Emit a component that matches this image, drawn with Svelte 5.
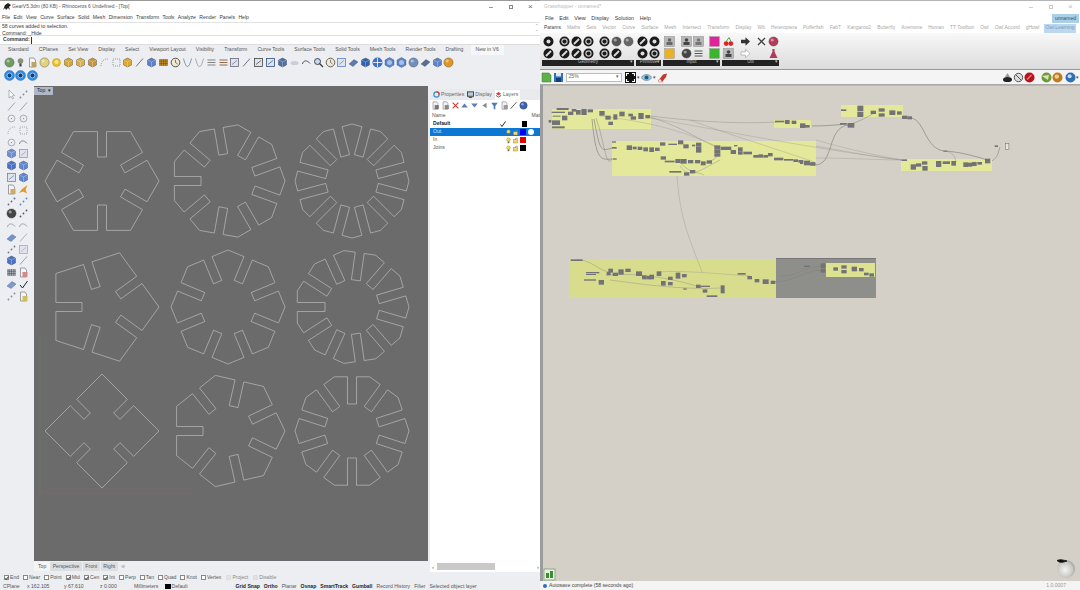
<script>
	const rhinoMenu = ["File", "Edit", "View", "Curve", "Surface", "Solid", "Mesh", "Dimension", "Transform", "Tools", "Analyze", "Render", "Panels", "Help"];
	const rhinoTabs = ["Standard", "CPlanes", "Set View", "Display", "Select", "Viewport Layout", "Visibility", "Transform", "Curve Tools", "Surface Tools", "Solid Tools", "Mesh Tools", "Render Tools", "Drafting", "New in V6"];
	const ghMenu = ["File", "Edit", "View", "Display", "Solution", "Help"];
	const ghTabs = ["Params", "Maths", "Sets", "Vector", "Curve", "Surface", "Mesh", "Intersect", "Transform", "Display", "Wb", "Heteroptera", "Pufferfish", "FabT", "Kangaroo2", "Butterfly", "Anemone", "Human", "TT Toolbox", "Owl", "Owl.Accord", "gHowl", "Owl.Learning"];

	const toolbar = [
		["ball", "#6f9b63"], ["bulb", "#8a8f7a"], ["doc", "#b9a36a"], ["ball", "#e3d27a"], ["bulb2", "#e8c02c"], ["cube", "#d9a62e"],
		["cube", "#d8b04a"], ["cube", "#c8963a"], ["dash", "#777"], ["dashbox", "#777"], ["cube", "#d9a62e"], ["line", "#667"],
		["cube", "#5d7fc4"], ["grid", "#c8902c"], ["clock", "#444"], ["vee", "#5c7390"], ["vee", "#7d8ea3"], ["bars", "#777"],
		["bars", "#8a5a3c"], ["frame", "#667"], ["line", "#667"], ["frame", "#444"], ["frame", "#31517f"], ["cube", "#4c6fa8"],
		["faded", "#ccd"], ["arc", "#444"], ["lens", "#334"], ["clock", "#555"], ["frame", "#5d82c8"], ["flat", "#5c7cb0"],
		["cube", "#2f62ad"], ["plus", "#3f6fc4"], ["hexa", "#5d82c8"], ["hexa", "#5d82c8"], ["ball", "#6f8fbc"], ["flat", "#55708f"],
		["cube", "#5d82c8"], ["ball", "#e2961c"]
	];
	const sideTools = [
		["cursor", "#889"], ["dots", "#889"], ["line", "#99a"], ["line", "#99a"], ["ring", "#99a"], ["ring", "#99a"],
		["dash", "#889"], ["dashbox", "#889"], ["ring", "#99a"], ["arc", "#778"], ["cube", "#6f8fd0"], ["frame", "#99a"],
		["cube", "#4a72c4"], ["cube", "#5d86d0"], ["frame", "#5d86d0"], ["cube", "#5d86d0"], ["doc", "#d0a860"], ["star", "#e09a20"],
		["dots", "#667"], ["dots", "#5d86d0"], ["ball", "#444"], ["dots", "#556"], ["arc", "#99a"], ["arc", "#99a"],
		["flat", "#6f95d4"], ["line", "#aab"], ["dots", "#778"], ["frame", "#aab"], ["cube", "#4a72c4"], ["line", "#8a9ab0"],
		["grid", "#a8acb4"], ["doc", "#d08a8a"], ["flat", "#7d9ad4"], ["check", "#222"], ["dots", "#889"], ["doc", "#d0bf5c"]
	];
	const panelIcons = [["doc", "#777"], ["doc", "#888"], ["x", "#d0342c"], ["up", "#5d7fb0"], ["down", "#5d7fb0"], ["left", "#888"], ["funnel", "#4f78b8"], ["doc", "#999"], ["line", "#222"], ["ball", "#3a62b0"]];

	const layers = [
		{ name: "Default", bold: true, check: true, color: "#000" },
		{ name: "Out", selected: true, color: "#0000f0" },
		{ name: "In", color: "#e00000" },
		{ name: "Joins", color: "#000" }
	];
	const snaps = [["End", 1], ["Near", 0], ["Point", 0], ["Mid", 1], ["Cen", 1], ["Int", 1], ["Perp", 0], ["Tan", 0], ["Quad", 0], ["Knot", 0], ["Vertex", 0]];
	const statusRight = [["Grid Snap", 1], ["Ortho", 1], ["Planar", 0], ["Osnap", 1], ["SmartTrack", 1], ["Gumball", 1], ["Record History", 0], ["Filter", 0], ["Selected object layer", 0]];

	// ribbon panels: numbers are spacer widths, pairs are the top and bottom icon
	const hx = (g) => ["hex", "#1b1b1b", g];
	const ribbon = [
		{ name: "Geometry", w: 92, cols: [[hx(0), hx(1)], 4, [hx(2), hx(1)], [hx(1), hx(1)], [hx(2), hx(2)], 3, [hx(2), hx(2)], ["ball:#555", hx(1)], ["ball:#666", null]] },
		{ name: "Primitive", w: 25, cols: [[hx(1), hx(0)], [hx(0), hx(2)]] },
		{ name: "Input", w: 57, cols: [[["frame2", "#666"], ["box", "#eab122"]], 4, [["frame2", "#444"], ["ball", "#444"]], [["frame2", "#777"], ["bars", "#444"]], 4, [["box", "#e0259a"], ["box", "#39b52e"]]] },
		{ name: "Util", w: 57, cols: [[["cherry", "#d22"], ["frame2", "#444"]], 4, [["arrow", "#333"], ["arrowo", "#999"]], 4, [["x", "#444"], ["faded", "#e8e8e8"]], [["ball", "#b33a5a"], ["flask", "#b33a5a"]]] }
	];
	const pair = (v) => (typeof v === "string" ? [v.split(":")[0], v.split(":")[1]] : v);

	// one cut gear: polygon of n corners with a slot in the middle of every edge
	function gear(cx, cy, n, rin) {
		const R = 57, w = 4.5, ap = R * Math.cos(Math.PI / n), pts = [];
		for (let k = 0; k < n; k++) {
			const b = (k * 2 * Math.PI) / n, a = ((k + 0.5) * 2 * Math.PI) / n;
			const ux = Math.cos(a), uy = -Math.sin(a), tx = -Math.sin(a), ty = -Math.cos(a);
			pts.push([cx + R * Math.cos(b), cy - R * Math.sin(b)]);
			pts.push([cx + ux * ap - tx * w, cy + uy * ap - ty * w]);
			pts.push([cx + ux * rin - tx * w, cy + uy * rin - ty * w]);
			pts.push([cx + ux * rin + tx * w, cy + uy * rin + ty * w]);
			pts.push([cx + ux * ap + tx * w, cy + uy * ap + ty * w]);
		}
		return pts.map((p) => p[0].toFixed(1) + "," + p[1].toFixed(1)).join(" ");
	}
	const gears = [
		gear(102, 181, 6, 24), gear(228, 181, 9, 27), gear(352, 181, 12, 26),
		gear(102, 307, 5, 20), gear(228, 307, 8, 27), gear(352, 307, 11, 27),
		gear(102, 431, 4, 21), gear(228, 431, 7, 25), gear(352, 431, 10, 27)
	];

	// Grasshopper definition, measured in 3x crops of the canvas
	const crops = [
		{ x: 540, y: 95, r: [[50,39,36,6],[35,50,40,4],[38,62,24,3],[66,62,16,14],[36,76,24,14],[26,75,8,8],[36,94,38,6],[84,50,16,10],[95,42,14,8],[108,45,14,14],[124,42,16,18],[143,43,16,9],[178,48,16,14],[196,62,16,12],[220,58,12,16],[238,50,16,14],[265,56,14,8],[272,64,16,10],[295,54,16,18],[316,60,14,10],[205,80,14,10],
			[705,77,28,5],[735,75,14,12],[755,77,14,10],[780,85,16,14],[795,90,14,8],
			[216,139,12,4],[216,156,14,5],[218,190,12,4],[260,151,16,14],[278,155,12,8],[293,155,14,10],[310,157,14,12],[328,157,14,14],[345,158,14,10],[360,142,16,10],[385,146,26,4],[414,136,16,12],[430,148,16,12],[456,149,10,5],[468,143,16,12],[468,155,16,12],[468,165,16,8],[362,184,16,10],[374,197,30,5],[406,192,16,12],[422,192,18,14],[444,195,16,10],[465,195,16,10],[483,199,14,12],[500,196,16,10],[388,228,36,5],[432,232,16,10],[450,225,16,10],[523,151,18,12],[523,163,18,12],[523,175,18,10],[542,155,16,10],[558,155,16,10],[572,165,16,12],[582,150,10,4],[594,157,14,12],[594,169,14,10],[610,170,26,8],[640,180,16,8],[655,178,14,10],[670,180,14,8],[684,174,14,10],[702,188,28,8],[732,192,28,5],[760,193,14,8],[775,195,12,8],[792,197,18,14],[812,202,14,9]] },
		{ x: 800, y: 95, r: [[123,43,16,5],[172,32,18,16],[172,50,18,16],[212,47,16,10],[236,40,18,10],[236,55,18,10],[268,46,18,14],[291,49,14,10],[306,62,16,10],[322,64,14,9],[120,84,20,5],[143,84,20,14],[0,195,10,12],[12,198,18,12],[30,202,16,10],
			[305,193,16,5],[332,208,16,16],[348,205,16,10],[366,199,16,10],[367,213,16,14],[408,198,16,18],[428,199,22,8],[454,198,14,14],[490,202,14,14],[503,203,14,12],[516,201,14,12],[532,201,14,8],[555,191,16,14],[430,167,12,3],[584,151,10,5]] },
		{ x: 560, y: 250, r: [[32,28,36,5],[78,66,40,4],[78,72,30,3],[72,88,36,4],[116,90,16,14],[145,56,14,12],[140,66,12,10],[158,68,16,10],[175,58,16,16],[196,56,16,10],[228,64,18,14],[246,76,14,12],[260,78,12,10],[268,74,14,14],[290,64,14,14],[303,93,14,14],[324,96,14,10],[324,80,14,10],[347,68,14,18],[366,72,14,10],[408,104,14,10],[422,107,28,4],[370,115,10,4],[428,118,14,10],[482,106,12,24],[440,136,32,5],[533,69,24,5],[562,78,14,10],[584,87,14,10],[608,88,18,14],[632,92,14,10],
			[732,47,18,4],[782,40,14,14],[782,56,14,12],[820,52,14,10],[844,46,16,10],[844,60,16,10],[875,50,16,14],[897,54,14,10],[912,68,14,8],[928,70,14,10]] }
	];
	const comps = crops.flatMap((c) => c.r.map(([x, y, w, h]) => ({ x: c.x + x / 3, y: c.y + y / 3, w: w / 3, h: h / 3 })));
	const groups = [
		{ x: 552, y: 109, w: 99, h: 20, f: "#e4e89a" },
		{ x: 612, y: 141, w: 204, h: 35, f: "#e4e89a" },
		{ x: 774, y: 120, w: 37, h: 8, f: "#e4e89a" },
		{ x: 841, y: 105, w: 62, h: 12, f: "#e4e89a" },
		{ x: 901, y: 159, w: 91, h: 12, f: "#e4e89a" },
		{ x: 569, y: 259, w: 207, h: 39, f: "#d8dd8e" },
		{ x: 776, y: 259, w: 100, h: 39, f: "#8e8e8a" },
		{ x: 826, y: 263, w: 49, h: 14, f: "#dde293" }
	];
	const wires = [
		["M594 119C600 150 600 152 612 148", 0.7], ["M592 119C596 160 600 160 612 159", 0.7],
		["M596 118C604 140 606 170 612 159", 0.5], ["M650 116C700 122 740 124 777 122", 0.4],
		["M650 117C680 126 700 140 716 147", 0.4], ["M600 116C650 122 680 130 716 146", 0.3],
		["M814 165C835 166 826 128 848 125", 0.7], ["M812 126C825 126 835 125 848 124", 0.7],
		["M848 125C858 122 866 118 876 112", 0.5], ["M911 118C925 120 925 150 945 151C960 152 975 156 987 160", 0.7],
		["M992 161C999 156 998 152 1000 147", 0.6], ["M945 151C952 152 955 156 956 162", 0.4],
		["M816 140C850 150 880 156 902 160", 0.3], ["M816 146C850 152 880 158 902 160", 0.3],
		["M816 158C850 158 880 160 902 160", 0.3], ["M650 118C720 130 820 150 902 160", 0.3],
		["M677 176C680 220 690 240 702 272", 0.3], ["M690 120C730 135 780 150 814 162", 0.3],
		["M780 276C800 276 800 268 821 266", 0.6], ["M772 282C795 282 800 272 820 270", 0.7],
		["M575 260C590 258 600 272 610 272", 0.4], ["M606 275C640 272 680 280 702 288", 0.4],
		["M610 280C640 284 680 290 722 288", 0.4], ["M660 272C680 270 720 274 750 276", 0.3],
		["M700 165C716 160 720 156 716 150", 0.5],
		["M678 160C690 175 700 172 704 175", 0.4], ["M680 166C690 180 700 170 720 160", 0.4]
	];
</script>

{#snippet icon(k, c, g = 0)}
	<svg class="ico" viewBox="0 0 11 11" aria-hidden="true">
		{#if k === "ball"}
			<circle cx="5.5" cy="5.5" r="4.6" fill={c} stroke="#444" stroke-width=".4" /><circle cx="4.2" cy="4" r="1.6" fill="#fff" opacity=".45" />
		{:else if k === "hex"}
			<circle cx="5.5" cy="5.5" r="5" fill={c} />
			{#if g === 0}<circle cx="5.5" cy="5.5" r="2" fill="#ddd" />{:else if g === 1}<path d="M3 8L8 3" stroke="#ddd" stroke-width="1.8" />{:else}<circle cx="5.5" cy="5.5" r="2.6" fill="none" stroke="#ccc" stroke-width="1.1" />{/if}
		{:else if k === "bulb"}
			<circle cx="5.5" cy="4" r="2.8" fill={c} /><rect x="4.4" y="6.5" width="2.2" height="3" fill="#445" />
		{:else if k === "bulb2"}
			<circle cx="5.5" cy="5.5" r="4" fill={c} stroke="#c89a1c" stroke-width=".6" /><circle cx="5.5" cy="5" r="2" fill="#fbe98a" />
		{:else if k === "doc"}
			<path d="M2.5 1H7L8.5 3V10H2.5Z" fill="#f4f4f4" stroke="#667" stroke-width=".6" /><rect x="4.5" y="5" width="5" height="5" fill={c} />
		{:else if k === "cube"}
			<path d="M5.5 1L9.5 3V8L5.5 10L1.5 8V3Z" fill={c} stroke="#444" stroke-width=".4" /><path d="M1.5 3L5.5 5L9.5 3M5.5 5V10" fill="none" stroke="#fff" stroke-width=".4" opacity=".7" />
		{:else if k === "dash"}
			<path d="M2 9C2 4 5 2 9 2" fill="none" stroke={c} stroke-width=".7" stroke-dasharray="1 1" />
		{:else if k === "dashbox"}
			<rect x="2" y="2" width="7" height="7" fill="none" stroke={c} stroke-width=".7" stroke-dasharray="1 1" />
		{:else if k === "line"}
			<path d="M2 9.5L9 1.5" stroke={c} stroke-width=".9" />
		{:else if k === "grid"}
			<rect x="1" y="2" width="9" height="7" fill={c} /><path d="M1 4.3H10M1 6.6H10M3.2 2V9M5.5 2V9M7.8 2V9" stroke="#333" stroke-width=".4" />
		{:else if k === "clock"}
			<circle cx="5.5" cy="5.5" r="4.3" fill="#f0e8d0" stroke={c} stroke-width=".9" /><path d="M5.5 2.8V5.5L7.6 7" fill="none" stroke={c} stroke-width=".7" />
		{:else if k === "vee"}
			<path d="M1.5 1.5C3 7 4 9.5 5.5 9.5C7 9.5 8 7 9.5 1.5" fill="none" stroke={c} stroke-width=".7" />
		{:else if k === "bars"}
			<path d="M1.5 3H9.5M1.5 5.5H9.5M1.5 8H9.5" stroke={c} stroke-width=".9" />
		{:else if k === "frame"}
			<rect x="1.5" y="1.5" width="8" height="8" fill="#dfe4ec" stroke={c} stroke-width=".8" /><path d="M3 7.5L8 3.5" stroke={c} stroke-width=".7" />
		{:else if k === "frame2"}
			<rect x=".5" y=".5" width="10" height="10" fill="#b9b9b9" stroke="#777" stroke-width=".4" /><circle cx="5.5" cy="4" r="1.8" fill={c} /><rect x="2.5" y="6" width="6" height="3" fill={c} />
		{:else if k === "faded"}
			<ellipse cx="5.5" cy="6" rx="4" ry="2" fill={c} />
		{:else if k === "arc"}
			<path d="M1.5 7C2 3.5 6 2.5 9 6.5" fill="none" stroke={c} stroke-width=".9" />
		{:else if k === "lens"}
			<circle cx="4.5" cy="4.5" r="3" fill="#c9d8ee" stroke={c} stroke-width=".9" /><path d="M6.5 6.5L10 10" stroke={c} stroke-width="1.2" />
		{:else if k === "flat"}
			<path d="M1 7L6 2.5L10 5L5 9.5Z" fill={c} stroke="#334" stroke-width=".3" />
		{:else if k === "plus"}
			<circle cx="5.5" cy="5.5" r="5" fill={c} /><path d="M5.5 1V10M1 5.5H10" stroke="#fff" stroke-width=".8" />
		{:else if k === "hexa"}
			<path d="M5.5 .5L10 3V8L5.5 10.5L1 8V3Z" fill={c} stroke="#33558f" stroke-width=".4" /><circle cx="5.5" cy="5.5" r="2.5" fill="#a9c0e6" />
		{:else if k === "ring"}
			<circle cx="5.5" cy="5.5" r="3.4" fill="none" stroke={c} stroke-width=".8" /><circle cx="5.5" cy="5.5" r=".7" fill={c} />
		{:else if k === "cursor"}
			<path d="M3 1L3 9L5 7.2L6.5 10L7.6 9.4L6.2 6.8L8.6 6.6Z" fill="#fff" stroke={c} stroke-width=".6" />
		{:else if k === "dots"}
			<circle cx="2.5" cy="8.5" r=".9" fill={c} /><circle cx="5.5" cy="5.5" r=".9" fill={c} /><circle cx="8.5" cy="2.5" r=".9" fill={c} />
		{:else if k === "star"}
			<path d="M9.5 1L7.5 5.5L9 9.5L5 7.5L1 9L4 5Z" fill={c} />
		{:else if k === "check"}
			<path d="M2 6L4.5 9L9.5 2" fill="none" stroke={c} stroke-width="1" />
		{:else if k === "x"}
			<path d="M2 2L9 9M9 2L2 9" stroke={c} stroke-width="1.3" />
		{:else if k === "up"}
			<path d="M5.5 3L9.5 8H1.5Z" fill={c} />
		{:else if k === "down"}
			<path d="M5.5 8L9.5 3H1.5Z" fill={c} />
		{:else if k === "left"}
			<path d="M3 5.5L8 2V9Z" fill={c} />
		{:else if k === "funnel"}
			<path d="M1.5 2H9.5L6.5 6V10H4.5V6Z" fill={c} />
		{:else if k === "box"}
			<rect x=".7" y=".7" width="9.6" height="9.6" fill={c} stroke="#666" stroke-width=".3" />
		{:else if k === "cherry"}
			<circle cx="3.2" cy="7.6" r="2.4" fill={c} /><circle cx="7.8" cy="7.6" r="2.4" fill={c} /><path d="M3.2 5.5L6 1.5L8 5.5" fill="none" stroke="#3a8a2a" stroke-width=".8" />
		{:else if k === "arrow"}
			<path d="M1 3.8H5.5V1.2L10 5.5L5.5 9.8V7.2H1Z" fill={c} />
		{:else if k === "arrowo"}
			<path d="M1 3.8H5.5V1.2L10 5.5L5.5 9.8V7.2H1Z" fill="#fff" stroke={c} stroke-width=".6" />
		{:else if k === "flask"}
			<path d="M4.4 1H6.6V4L9.5 10H1.5L4.4 4Z" fill={c} />
		{/if}
	</svg>
{/snippet}

<div class="screen">
	<section class="rhino">
		<header class="title">
			<svg class="logo" viewBox="0 0 8 8"><path d="M0 7L2 2L5 0L8 2L6 4L7 7L5 5L3 7L2 5Z" fill="#222" /></svg>
			<span>GearV5.3dm (80 KB) - Rhinoceros 6 Undefined - [Top]</span>
			<div class="controls"><i class="min"></i><i class="max"></i><i class="close">×</i></div>
		</header>
		<nav class="menu">{#each rhinoMenu as m}<span>{m}</span>{/each}</nav>
		<div class="history">
			<div>58 curves added to selection.</div>
			<div>Command: _Hide</div>
			<b class="chev">⌃<br />⌄</b>
		</div>
		<div class="command"><b>Command:</b><i class="caret"></i></div>
		<div class="tabs">
			{#each rhinoTabs as t}<span class:on={t === "New in V6"}>{t}</span>{/each}
		</div>
		<div class="tools">{#each toolbar as [k, c]}{@render icon(k, c)}{/each}</div>
		<div class="tools second">
			{#each [0, 1, 2] as _}
				<svg class="ico" viewBox="0 0 11 11"><circle cx="5.5" cy="5.5" r="5" fill="#2f8de4" stroke="#1c5ea8" stroke-width=".4" /><circle cx="5.5" cy="5.5" r="2.4" fill="#123f7c" stroke="#cfe4fb" stroke-width=".7" /></svg>
			{/each}
		</div>

		<div class="main">
			<div class="side">{#each sideTools as [k, c]}{@render icon(k, c)}{/each}</div>
			<div class="viewport">
				<div class="vtab">Top <em>▾</em></div>
				<svg class="model" viewBox="34 86 394 475">
					<path d="M40 335V493" stroke="#6b7a6b" stroke-width=".8" fill="none" />
					<path d="M40 493H192" stroke="#7d6868" stroke-width=".8" fill="none" />
					{#each gears as g}<polygon points={g} />{/each}
				</svg>
			</div>
			<aside class="panel">
				<div class="ptabs">
					<span class="ptab"><svg viewBox="0 0 8 8"><circle cx="4" cy="4" r="3" fill="none" stroke="#3a8fd0" stroke-width="1.4" /><path d="M4 1A3 3 0 0 1 7 4" fill="none" stroke="#d8402c" stroke-width="1.4" /></svg>Properties</span>
					<span class="ptab"><svg viewBox="0 0 8 8"><rect x=".5" y="1" width="7" height="5" fill="#bcd" stroke="#333" /><path d="M2 7.5H6" stroke="#333" /></svg>Display</span>
					<span class="ptab cur"><svg viewBox="0 0 8 8"><path d="M1 3L4 1L7 3L4 5Z" fill="#d84040" /><path d="M1 5L4 7L7 5" fill="none" stroke="#555" /></svg>Layers</span>
				</div>
				<div class="picons">{#each panelIcons as [k, c]}{@render icon(k, c)}{/each}</div>
				<div class="lhead"><span>Name</span><span>Mat</span></div>
				{#each layers as l}
					<div class="layer" class:sel={l.selected}>
						<span class="lname" class:strong={l.bold}>{l.name}</span>
						{#if l.check}
							<svg class="tick" viewBox="0 0 6 6"><path d="M.5 3.5L2 5.5L5.5 .5" fill="none" stroke="#111" stroke-width=".9" /></svg>
							<i class="swatch" style:background={l.color}></i>
						{:else}
							<svg class="lbulb" viewBox="0 0 6 8"><circle cx="3" cy="3" r="2.2" fill="#f2dc55" stroke="#a08a20" stroke-width=".5" /><rect x="2" y="5.2" width="2" height="2" fill="#666" /></svg>
							<svg class="lbulb" viewBox="0 0 6 8"><rect x=".5" y="3" width="5" height="4" fill="#efd77a" stroke="#8a7a30" stroke-width=".5" /><path d="M3 3V1.3H6" fill="none" stroke="#6f8a40" stroke-width=".7" /></svg>
							<i class="swatch" style:background={l.color}></i>
							{#if l.selected}<i class="mat"></i>{/if}
						{/if}
					</div>
				{/each}
			</aside>
		</div>

		<div class="vtabs">
			<span class="first">Top</span><span class="alt">Perspective</span><span class="alt">Front</span><span class="alt">Right</span><span class="add">⊕</span>
			<div class="scroll"><i>‹</i><b></b><i class="end">›</i></div>
		</div>
		<div class="snaps">
			{#each snaps as [name, on]}
				<label class="snap"><i class="cb" class:checked={on}></i>{name}</label>
			{/each}
			<label class="snap dim wide"><i class="cb"></i>Project</label>
			<label class="snap dim"><i class="cb"></i>Disable</label>
		</div>
		<footer class="status">
			<span class="s-plane">CPlane</span><span class="s-x">x 162.105</span><span class="s-y">y 67.610</span><span class="s-z">z 0.000</span><span class="s-u">Millimeters</span>
			<i class="swatch s-sw"></i><span class="s-l">Default</span>
			<div class="s-right">{#each statusRight as [t, bold]}<span class:strong={bold}>{t}</span>{/each}</div>
		</footer>
	</section>

	<section class="gh">
		<header class="gtitle">
			<span>Grasshopper - unnamed*</span>
			<div class="controls pale"><i class="min"></i><i class="max"></i><i class="close">×</i></div>
		</header>
		<nav class="gmenu">
			{#each ghMenu as m}<span>{m}</span>{/each}
			<b class="badge">unnamed</b>
		</nav>
		<div class="gtabs">
			{#each ghTabs as t, i}<span class:first={i === 0} class:active={t === "Owl.Learning"}>{t}</span>{/each}
		</div>
		<div class="ribbon">
			{#each ribbon as p}
				<div class="rpanel" style:width="{p.w}px">
					<div class="rcols">
						{#each p.cols as col}
							{#if typeof col === "number"}
								<i style:width="{col}px"></i>
							{:else}
								<div class="rcol">
									{#each col as cell}
										{#if cell}{@const [k, c, g] = pair(cell)}{@render icon(k, c, g)}{:else}<i class="ico"></i>{/if}
									{/each}
								</div>
							{/if}
						{/each}
					</div>
					<div class="rname">{p.name}<em>▾</em></div>
				</div>
			{/each}
		</div>
		<div class="gbar">
			<svg class="ico" viewBox="0 0 11 11"><path d="M1 1H8L10 3V10H1Z" fill="#5fb04a" stroke="#3d7a30" stroke-width=".5" /></svg>
			<svg class="ico" viewBox="0 0 11 11"><rect x="1" y="1" width="9" height="9" fill="#2f6fc0" /><rect x="3" y="1" width="5" height="3.4" fill="#dbe8f6" /><rect x="3" y="6" width="5" height="4" fill="#123f7c" /></svg>
			<div class="combo">25%<em>▾</em></div>
			<svg class="ico" viewBox="0 0 11 11"><rect x="0" y="0" width="11" height="11" fill="#111" /><path d="M4 1.5H1.5V4M7 1.5H9.5V4M4 9.5H1.5V7M7 9.5H9.5V7" fill="none" stroke="#fff" stroke-width="1.1" /></svg>
			<em class="drop">▾</em>
			<svg class="ico" viewBox="0 0 11 11"><path d="M0 5.5C3 1.5 8 1.5 11 5.5C8 9.5 3 9.5 0 5.5Z" fill="#9cc3d8" stroke="#3a6a8a" stroke-width=".5" /><circle cx="5.5" cy="5.5" r="2" fill="#1f5a80" /></svg>
			<em class="drop">▾</em>
			<svg class="ico" viewBox="0 0 11 11"><path d="M1 9L6 2.5L10 1.5L9 5L5 10Z" fill="#c8362c" /><path d="M1 9L3 6.5L5.5 10H2Z" fill="#eee" stroke="#c8362c" stroke-width=".4" /></svg>
			<div class="gright">
				<svg class="ico" viewBox="0 0 11 11"><path d="M5.5 1L8 5H3Z" fill="#999" /><ellipse cx="5.5" cy="7.5" rx="4.5" ry="2.6" fill="#222" /></svg>
				<svg class="ico" viewBox="0 0 11 11"><circle cx="5.5" cy="5.5" r="4.2" fill="#ddd" stroke="#555" stroke-width="1" /><path d="M2.6 2.6L8.4 8.4" stroke="#555" stroke-width="1" /></svg>
				<svg class="ico" viewBox="0 0 11 11"><circle cx="5.5" cy="5.5" r="5" fill="#b8141c" /><path d="M3 7.5L7.5 3" stroke="#ee8080" stroke-width="1.3" /></svg>
				<svg class="ico sp" viewBox="0 0 11 11"><circle cx="5.5" cy="5.5" r="5" fill="#6f9a3c" /><path d="M1 4L8 3L7 8Z" fill="#d8e8b0" /></svg>
				<svg class="ico" viewBox="0 0 11 11"><circle cx="5.5" cy="5.5" r="5" fill="#c07a20" /><circle cx="4.8" cy="4.6" r="2.2" fill="#efcf90" /></svg>
				<svg class="ico sp2" viewBox="0 0 11 11"><circle cx="5.5" cy="5.5" r="5" fill="#2f6fb8" /><circle cx="4.6" cy="4.2" r="2" fill="#c8dcf2" /></svg>
				<em class="drop">▾</em>
			</div>
		</div>
		<div class="canvas">
			<svg class="defn" viewBox="543 86 537 495">
				{#each groups as g}<rect x={g.x} y={g.y} width={g.w} height={g.h} fill={g.f} />{/each}
				<path d="M776 258.5H876" stroke="#777" stroke-width="1" />
				{#each wires as [d, sw]}<path {d} fill="none" stroke="#85857f" stroke-width={sw} />{/each}
				{#each comps as c}<rect x={c.x} y={c.y} width={c.w} height={c.h} fill="#737377" />{/each}
				<rect x="1005.5" y="143.5" width="3.4" height="6" fill="#e8e6e0" stroke="#666" stroke-width=".5" />
				<defs>
					<radialGradient id="sphere" cx=".45" cy=".55" r=".6"><stop offset="0" stop-color="#f4f4f2" /><stop offset=".7" stop-color="#c8c8c6" /><stop offset="1" stop-color="#96968f" /></radialGradient>
				</defs>
				<circle cx="1066" cy="569" r="9" fill="url(#sphere)" />
				<path d="M1057 560.5C1060 563.5 1064 562 1067 561C1063 560 1060 559 1057 560.5Z" fill="#111" stroke="#111" stroke-width=".8" />
				<rect x="544" y="569" width="11" height="11" fill="#e8f0e0" stroke="#5f8a50" stroke-width=".6" />
				<rect x="546" y="573" width="3" height="5" fill="#3d8a35" /><rect x="550" y="571" width="3" height="7" fill="#3d8a35" />
			</svg>
		</div>
		<footer class="gstatus"><i class="spot"></i><span>Autosave complete (58 seconds ago)</span><span class="ver">1.0.0007</span></footer>
	</section>
</div>

<style>
	:global(body) {
		margin: 0;
		background: #fff;
	}
	.screen {
		display: flex;
		width: 1080px;
		height: 590px;
		overflow: hidden;
		font-family: "Liberation Sans", Arial, sans-serif;
		font-size: 5.1px;
		line-height: 1;
		color: #3a3a3a;
	}
	.ico {
		display: block;
		flex: none;
		width: 11px;
		height: 11px;
	}
	em {
		font-style: normal;
	}
	i {
		font-style: normal;
		display: block;
	}

	/* rhino window */
	.rhino {
		width: 540px;
		display: flex;
		flex-direction: column;
		background: #eceef1;
		border-top: 1px solid #9a9a9a;
		box-sizing: border-box;
	}
	.title {
		height: 12px;
		flex: none;
		background: #fff;
		display: flex;
		align-items: center;
		padding-left: 3px;
		gap: 1px;
		color: #555;
		font-size: 4.9px;
	}
	.logo {
		width: 8px;
		height: 8px;
	}
	.controls {
		margin-left: auto;
		display: flex;
		align-items: center;
		gap: 15.5px;
		padding-right: 8px;
		color: #444;
	}
	.controls i {
		width: 4px;
	}
	.min {
		height: 0;
		border-top: 1px solid #999;
	}
	.max {
		height: 4px;
		border: 0.6px solid #888;
		box-sizing: border-box;
	}
	.close {
		font-size: 8px;
		color: #666;
	}
	.controls.pale {
		opacity: 0.45;
	}
	.menu {
		height: 9px;
		flex: none;
		background: #fff;
		display: flex;
		align-items: center;
		gap: 3.4px;
		padding-left: 2px;
	}
	.history {
		position: relative;
		height: 14px;
		flex: none;
		background: #fff;
		box-sizing: border-box;
		padding: 1px 0 0 2px;
		border-top: 1px solid #e2e2e2;
		border-bottom: 1px solid #e2e2e2;
		display: flex;
		flex-direction: column;
		gap: 2px;
	}
	.chev {
		position: absolute;
		right: 2px;
		top: 1px;
		font-weight: normal;
		font-size: 4px;
		color: #888;
	}
	.command {
		height: 9px;
		flex: none;
		background: #fff;
		display: flex;
		align-items: center;
		padding-left: 3px;
		gap: 1px;
		border-bottom: 1px solid #ddd;
		box-sizing: border-box;
	}
	.caret {
		width: 1px;
		height: 7px;
		background: #333;
	}
	.tabs {
		height: 10px;
		flex: none;
		display: flex;
		align-items: center;
		padding-left: 8px;
		gap: 10.1px;
		color: #555;
	}
	.tabs .on {
		background: #f6f7f8;
		padding: 2.5px 5px;
		margin-left: -3px;
	}
	.tools {
		height: 14px;
		flex: none;
		display: flex;
		align-items: center;
		gap: 0.9px;
		padding-left: 3.5px;
	}
	.tools.second {
		height: 13px;
	}
	.main {
		margin-top: 4px;
		height: 475px;
		flex: none;
		display: flex;
	}
	.side {
		width: 34px;
		flex: none;
		box-sizing: border-box;
		padding: 3px 0 0 0;
		display: grid;
		grid-template-columns: 11px 11px;
		grid-auto-rows: 11px;
		column-gap: 1px;
		row-gap: 0.9px;
		justify-content: center;
		align-content: start;
	}
	.viewport {
		position: relative;
		width: 394px;
		flex: none;
		background: #6b6b6b;
	}
	.model {
		display: block;
		width: 394px;
		height: 475px;
	}
	.model polygon {
		fill: none;
		stroke: #c9c9c9;
		stroke-width: 0.6;
	}
	.vtab {
		position: absolute;
		left: 0;
		top: 1px;
		width: 19px;
		height: 8px;
		box-sizing: border-box;
		padding-left: 3px;
		background: #aeb8c8;
		color: #223;
		display: flex;
		align-items: center;
		gap: 3px;
	}
	.panel {
		flex: 1;
		margin: 3px 0 0 2px;
		background: #fff;
		display: flex;
		flex-direction: column;
	}
	.ptabs {
		height: 11px;
		background: #e8eaed;
		display: flex;
		align-items: center;
		gap: 1px;
		padding-left: 3px;
		color: #666;
	}
	.ptab {
		display: flex;
		align-items: center;
		gap: 1px;
		height: 10px;
		padding-right: 2px;
	}
	.ptab svg {
		width: 7px;
		height: 7px;
	}
	.ptab.cur {
		background: #fff;
	}
	.picons {
		height: 11px;
		display: flex;
		align-items: center;
		padding-left: 1px;
	}
	.picons :global(svg) {
		width: 9px;
		height: 9px;
		margin-right: 0.8px;
	}
	.lhead {
		display: flex;
		justify-content: space-between;
		padding: 2px 0 0 2px;
		height: 9px;
		box-sizing: border-box;
		color: #555;
	}
	.layer {
		height: 8px;
		display: flex;
		align-items: center;
		padding-left: 3px;
		position: relative;
		color: #555;
	}
	.layer.sel {
		background: #0d78d4;
		color: #cde4f8;
	}
	.lname {
		width: 73px;
		flex: none;
	}
	.strong {
		font-weight: bold;
		color: #222;
	}
	.tick {
		width: 6px;
		height: 6px;
		margin: 0 15.5px 0 -6px;
	}
	.lbulb {
		width: 5px;
		height: 7px;
		margin-right: 2px;
	}
	.swatch {
		width: 5.5px;
		height: 5.5px;
		background: #000;
		flex: none;
	}
	.mat {
		width: 6px;
		height: 6px;
		border-radius: 50%;
		background: #fff;
		margin-left: 2px;
	}
	.vtabs {
		height: 11px;
		flex: none;
		display: flex;
		align-items: center;
		padding-left: 34px;
		color: #555;
	}
	.vtabs span {
		height: 9px;
		display: flex;
		align-items: center;
		padding: 0 2.5px;
	}
	.vtabs .first {
		background: #f4f5f6;
		padding: 0 4px;
	}
	.vtabs .alt {
		background: #dcdee2;
		margin-right: 1px;
	}
	.vtabs .add {
		color: #aaa;
	}
	.scroll {
		margin-left: auto;
		width: 110px;
		height: 11px;
		box-sizing: border-box;
		background: #fff;
		display: flex;
		align-items: center;
		padding: 0 1px 0 2px;
		color: #666;
		font-size: 6px;
		gap: 3px;
	}
	.scroll b {
		width: 58px;
		height: 7px;
		background: #c9c9c9;
	}
	.scroll .end {
		margin-left: auto;
	}
	.snaps {
		height: 11px;
		flex: none;
		display: flex;
		align-items: center;
		padding-left: 4px;
		color: #555;
	}
	.snap {
		display: flex;
		align-items: center;
		gap: 1px;
		margin-right: 4px;
	}
	.snap.wide {
		margin-left: 1px;
		margin-right: 5px;
	}
	.snap.dim {
		color: #888;
	}
	.cb {
		width: 5px;
		height: 5px;
		box-sizing: border-box;
		background: #fff;
		border: 0.5px solid #888;
		position: relative;
	}
	.snap.dim .cb {
		background: #e2e2e2;
		border-color: #ddd;
	}
	.cb.checked::after {
		content: "";
		position: absolute;
		left: 1.1px;
		top: 0;
		width: 1.2px;
		height: 2.6px;
		border: solid #555;
		border-width: 0 0.6px 0.6px 0;
		transform: rotate(40deg);
	}
	.status {
		height: 7px;
		flex: none;
		display: flex;
		align-items: center;
		color: #555;
	}
	.s-plane {
		margin-left: 3px;
		width: 24px;
	}
	.s-x {
		width: 37px;
	}
	.s-y {
		width: 36px;
	}
	.s-z {
		width: 34px;
	}
	.s-u {
		width: 31px;
	}
	.s-sw {
		margin-right: 1px;
	}
	.s-l {
		width: 64px;
	}
	.s-right {
		display: flex;
		gap: 4px;
	}

	/* grasshopper window */
	.gh {
		width: 540px;
		display: flex;
		flex-direction: column;
		background: #fff;
		border-top: 1px solid #b5b5b5;
		box-sizing: border-box;
		position: relative;
	}
	.gtitle {
		height: 12px;
		flex: none;
		display: flex;
		align-items: center;
		padding-left: 4px;
		color: #bbb;
	}
	.gmenu {
		height: 11px;
		flex: none;
		display: flex;
		align-items: center;
		gap: 5.6px;
		padding-left: 5px;
		font-size: 5.4px;
	}
	.badge {
		margin-left: auto;
		width: 27px;
		height: 9px;
		margin-right: 1px;
		background: #a9cfe9;
		color: #356;
		font-weight: normal;
		font-size: 5.1px;
		display: flex;
		align-items: center;
		justify-content: center;
	}
	.gtabs {
		height: 9px;
		flex: none;
		display: flex;
		align-items: center;
		padding-left: 4px;
		gap: 6.1px;
		color: #a8a8a8;
		font-size: 4.9px;
		white-space: nowrap;
	}
	.gtabs .first {
		color: #444;
	}
	.gtabs .active {
		background: #bcd8ee;
		color: #7a9ab5;
		padding: 2px 2px;
		margin-left: -2px;
	}
	.ribbon {
		height: 37px;
		flex: none;
		box-sizing: border-box;
		background: linear-gradient(#f8f8f8, #dcdcdc);
		display: flex;
		gap: 2px;
		padding: 3px 0 0 2px;
		border-bottom: 1px solid #999;
	}
	.rpanel {
		display: flex;
		flex-direction: column;
		flex: none;
	}
	.rcols {
		height: 23px;
		display: flex;
		gap: 1px;
		padding-left: 1px;
	}
	.rcol {
		display: flex;
		flex-direction: column;
		row-gap: 0.5px;
	}
	.rname {
		height: 6px;
		background: #222;
		color: #bbb;
		font-size: 4.6px;
		display: flex;
		align-items: center;
		justify-content: center;
		position: relative;
		margin-top: 0.5px;
	}
	.rname em {
		position: absolute;
		right: 1px;
	}
	.gbar {
		height: 15px;
		flex: none;
		box-sizing: border-box;
		display: flex;
		align-items: center;
		padding-left: 0.5px;
		gap: 1px;
		border-bottom: 1px solid #aaa;
		background: #f4f4f4;
	}
	.combo {
		width: 56px;
		height: 9px;
		background: #fff;
		border: 0.6px solid #bbb;
		box-sizing: border-box;
		display: flex;
		align-items: center;
		justify-content: space-between;
		padding: 0 2px;
		margin: 0 2px 0 1px;
		color: #666;
	}
	.drop {
		color: #555;
		font-size: 5px;
	}
	.gright {
		margin-left: auto;
		display: flex;
		align-items: center;
		padding-right: 1px;
	}
	.gright .sp {
		margin-left: 6px;
	}
	.gright .sp2 {
		margin-left: 2px;
	}
	.canvas {
		flex: 1;
		position: relative;
		margin-left: 3px;
		min-height: 0;
		background: #d4d0c8;
		border-top: 1px solid #bdb9b2;
		box-shadow: -3px 0 0 #9c9c9c;
	}
	.defn {
		display: block;
		width: 537px;
		height: 495px;
	}
	.gstatus {
		height: 9px;
		flex: none;
		display: flex;
		align-items: center;
		gap: 2px;
		padding-left: 3px;
		background: #f4f4f4;
		color: #444;
	}
	.spot {
		width: 4px;
		height: 4px;
		border-radius: 50%;
		background: #2f6fb8;
	}
	.ver {
		margin-left: auto;
		margin-right: 14px;
		color: #999;
	}
</style>
